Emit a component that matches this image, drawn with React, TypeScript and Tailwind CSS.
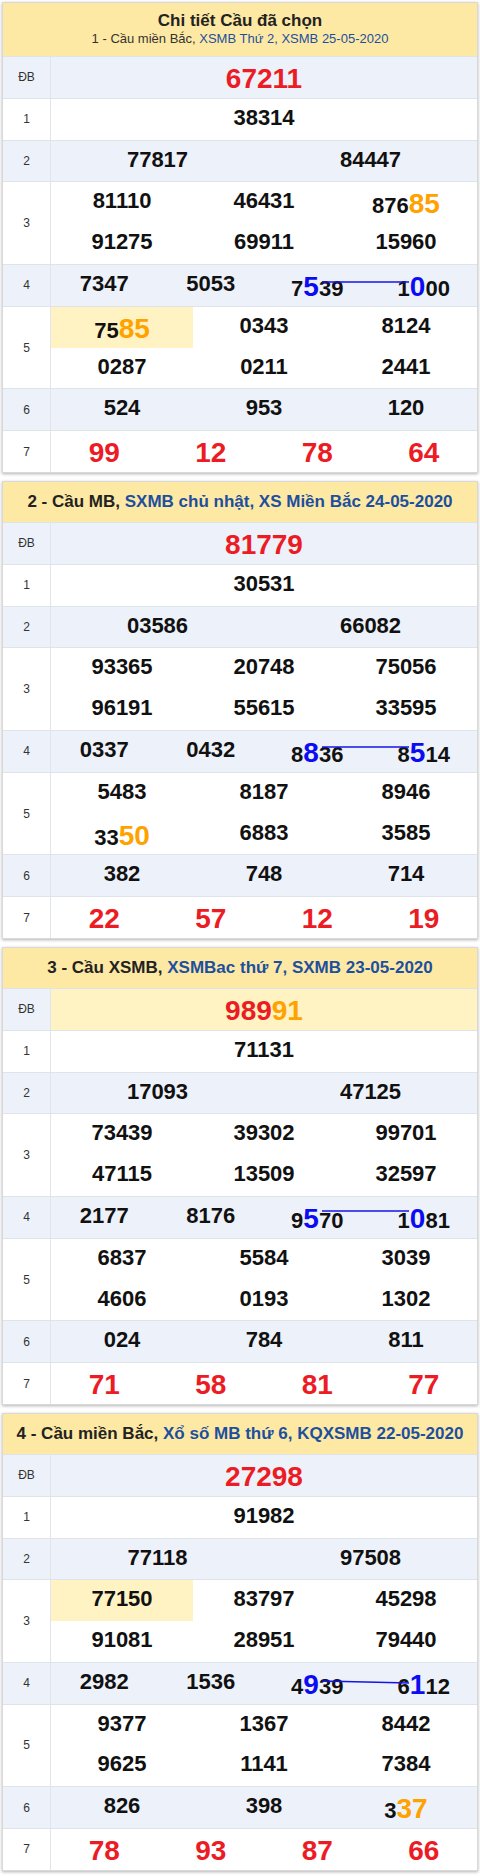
import React from "react";

// markup: [xx] = big orange digits, {x} = big blue digit, leading * = yellow cell
type Card = {
  head: React.ReactNode;
  tall?: boolean;
  db: string;
  dbHl?: boolean;
  r1: string[];
  r2: string[];
  r3: string[];
  r4: string[];
  r5: string[];
  r6: string[];
  r7: string[];
  line: { y1: number; y2: number };
};

const cards: Card[] = [
  {
    tall: true,
    head: (
      <>
        <div className="text-[17px] leading-[19px] font-bold text-[#222]">Chi tiết Cầu đã chọn</div>
        <div className="text-[13px] leading-[18px] text-[#333]">
          1 - Cầu miền Bắc, <span className="text-[#1d4f9f]">XSMB Thứ 2, XSMB 25-05-2020</span>
        </div>
      </>
    ),
    db: "67211",
    r1: ["38314"],
    r2: ["77817", "84447"],
    r3: ["81110", "46431", "876[85]", "91275", "69911", "15960"],
    r4: ["7347", "5053", "7{5}39", "1{0}00"],
    r5: ["*75[85]", "0343", "8124", "0287", "0211", "2441"],
    r6: ["524", "953", "120"],
    r7: ["99", "12", "78", "64"],
    line: { y1: 17, y2: 17 },
  },
  {
    head: (
      <div className="text-[17px] font-bold text-[#222]">
        2 - Cầu MB, <span className="text-[#1d4f9f]">SXMB chủ nhật, XS Miền Bắc 24-05-2020</span>
      </div>
    ),
    db: "81779",
    r1: ["30531"],
    r2: ["03586", "66082"],
    r3: ["93365", "20748", "75056", "96191", "55615", "33595"],
    r4: ["0337", "0432", "8{8}36", "8{5}14"],
    r5: ["5483", "8187", "8946", "33[50]", "6883", "3585"],
    r6: ["382", "748", "714"],
    r7: ["22", "57", "12", "19"],
    line: { y1: 16, y2: 16 },
  },
  {
    head: (
      <div className="text-[17px] font-bold text-[#222]">
        3 - Cầu XSMB, <span className="text-[#1d4f9f]">XSMBac thứ 7, SXMB 23-05-2020</span>
      </div>
    ),
    db: "989[91]",
    dbHl: true,
    r1: ["71131"],
    r2: ["17093", "47125"],
    r3: ["73439", "39302", "99701", "47115", "13509", "32597"],
    r4: ["2177", "8176", "9{5}70", "1{0}81"],
    r5: ["6837", "5584", "3039", "4606", "0193", "1302"],
    r6: ["024", "784", "811"],
    r7: ["71", "58", "81", "77"],
    line: { y1: 14, y2: 14 },
  },
  {
    head: (
      <div className="text-[17px] font-bold text-[#222]">
        4 - Cầu miền Bắc, <span className="text-[#1d4f9f]">Xổ số MB thứ 6, KQXSMB 22-05-2020</span>
      </div>
    ),
    db: "27298",
    r1: ["91982"],
    r2: ["77118", "97508"],
    r3: ["*77150", "83797", "45298", "91081", "28951", "79440"],
    r4: ["2982", "1536", "4{9}39", "6{1}12"],
    r5: ["9377", "1367", "8442", "9625", "1141", "7384"],
    r6: ["826", "398", "3[37]"],
    r7: ["78", "93", "87", "66"],
    line: { y1: 18, y2: 20 },
  },
];

function Digits({ v }: { v: string }) {
  const parts = v.split(/(\[[^\]]+\]|\{[^}]+\})/).filter(Boolean);
  return (
    <>
      {parts.map((p, i) => {
        if (p.startsWith("[")) return <span key={i} className="text-[28px] text-[#ffa200]">{p.slice(1, -1)}</span>;
        if (p.startsWith("{")) return <span key={i} className="text-[28px] text-[#0c0cf2]">{p.slice(1, -1)}</span>;
        return <span key={i}>{p}</span>;
      })}
    </>
  );
}

function Item({ v, big }: { v: string; big?: boolean }) {
  const hl = v.startsWith("*");
  const s = hl ? v.slice(1) : v;
  return (
    <div
      className={
        "h-[40.8px] pt-[6px] text-center whitespace-nowrap leading-[normal] font-bold " +
        (big ? "text-[28px] text-[#ec1c24] " : "text-[22px] text-[#111] ") +
        (hl ? "bg-[#fff3c4]" : "")
      }
    >
      <Digits v={s} />
    </div>
  );
}

function Row({
  label,
  items,
  cols,
  blue,
  big,
  line,
  hlAll,
}: {
  label: string;
  items: string[];
  cols: string;
  blue?: boolean;
  big?: boolean;
  line?: { y1: number; y2: number };
  hlAll?: boolean;
}) {
  return (
    <div className={"flex border-b border-[#dfe3ea] last:border-b-0 " + (blue ? "bg-[#edf2fa]" : "bg-white")}>
      <div className="w-[48px] shrink-0 border-r border-[#e1e4e9] flex items-center justify-center text-[12px] text-[#333]">
        {label}
      </div>
      <div className={"relative flex-1 grid " + cols + (hlAll ? " bg-[#fff3c4]" : "")}>
        {items.map((v, i) => (
          <Item key={i} v={v} big={big} />
        ))}
        {line && (
          <svg className="absolute inset-0 w-full h-full pointer-events-none">
            <line x1={271} y1={line.y1} x2={358} y2={line.y2} stroke="#1414e6" strokeWidth={1.6} />
          </svg>
        )}
      </div>
    </div>
  );
}

function CardView({ c }: { c: Card }) {
  return (
    <div className="mx-[2px] mb-[8px] border border-[#d9d9d9] bg-white shadow-[0_1px_3px_rgba(0,0,0,0.3)]">
      <div
        className={
          "bg-[#fde9a3] border-b border-[#dfe3ea] text-center " +
          (c.tall ? "h-[54px] pt-[8px]" : "h-[41px] flex items-center justify-center")
        }
      >
        {c.head}
      </div>
      <Row label="ĐB" items={[c.db]} cols="grid-cols-1" blue big hlAll={c.dbHl} />
      <Row label="1" items={c.r1} cols="grid-cols-1" />
      <Row label="2" items={c.r2} cols="grid-cols-2" blue />
      <Row label="3" items={c.r3} cols="grid-cols-3" />
      <Row label="4" items={c.r4} cols="grid-cols-4" blue line={c.line} />
      <Row label="5" items={c.r5} cols="grid-cols-3" />
      <Row label="6" items={c.r6} cols="grid-cols-3" blue />
      <Row label="7" items={c.r7} cols="grid-cols-4" big />
    </div>
  );
}

export default function App() {
  return (
    <div className="w-[480px] min-h-[1876px] bg-white pt-[2px] font-['Liberation_Sans',Arial,sans-serif]">
      {cards.map((c, i) => (
        <CardView key={i} c={c} />
      ))}
    </div>
  );
}
